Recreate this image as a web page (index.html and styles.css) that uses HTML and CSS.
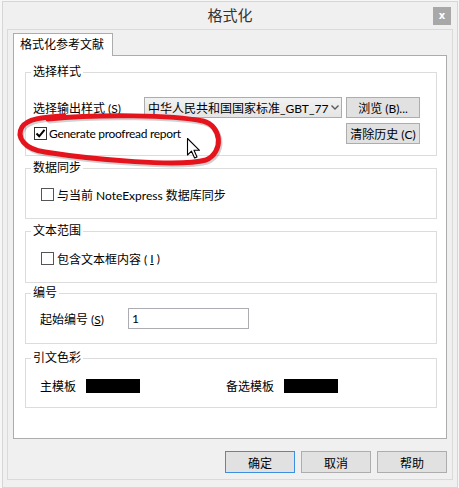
FILE: index.html
```html
<!DOCTYPE html>
<html>
  <head>
    <meta charset="utf-8">
    <title>格式化</title>
    <link rel="stylesheet" href="styles.css">
  </head>
  <body>
    <div class="window">
      <div class="titlebar">
        <div class="title">格式化</div>
        <div class="close">x</div>
      </div>
      <div class="client">
        <div class="tabs">
          <div class="tab">格式化参考文献</div>
        </div>
        <div class="page">

          <fieldset class="group g1">
            <legend>选择样式</legend>
            <div class="style-grid">
              <span>选择输出样式 (<u>S</u>)</span>
              <div class="select">
                <span class="select-text">中华人民共和国国家标准_GBT_77</span>
                <svg class="chev" width="8" height="5" viewBox="0 0 8 5"><polyline points="0.5,0.5 4,4 7.5,0.5" fill="none" stroke="#5a5a5a" stroke-width="1.4"/></svg>
              </div>
              <button class="btn">浏览 (B)...</button>
              <label class="check wide">
                <span class="box on"><svg width="11" height="11" viewBox="0 0 11 11"><polyline points="1.5,5.5 4.2,8.3 9.5,1.8" fill="none" stroke="#000" stroke-width="2"/></svg></span>
                <span class="latin">Generate proofread report</span>
              </label>
              <button class="btn">清除历史 (C)</button>
            </div>
          </fieldset>

          <fieldset class="group g2">
            <legend>数据同步</legend>
            <label class="check indent"><span class="box"></span>与当前 NoteExpress 数据库同步</label>
          </fieldset>

          <fieldset class="group g3">
            <legend>文本范围</legend>
            <label class="check indent"><span class="box"></span>包含文本框内容 (<u>I</u>)</label>
          </fieldset>

          <fieldset class="group g4">
            <legend>编号</legend>
            <div class="num-row">
              <span>起始编号 (<u>S</u>)</span>
              <input class="field" type="text" value="1">
            </div>
          </fieldset>

          <fieldset class="group g5">
            <legend>引文色彩</legend>
            <div class="color-row">
              <div class="swatch-item">主模板<span class="swatch"></span></div>
              <div class="swatch-item">备选模板<span class="swatch"></span></div>
            </div>
          </fieldset>

        </div>
        <div class="actions">
          <button class="btn default">确定</button>
          <button class="btn">取消</button>
          <button class="btn">帮助</button>
        </div>
      </div>
    </div>

    <!-- hand drawn highlight and mouse pointer over the dialog -->
    <svg class="annot" width="459" height="488" viewBox="0 0 459 488">
      <path d="M48 119 C100 114 172 115 203 121 C222 126 224 152 206 160 C180 167 95 160 45 152 C24 149 16 137 22 127 C27 119 42 117 64 116" fill="none" stroke="#000" stroke-opacity="0.18" stroke-width="5" stroke-linecap="round" transform="translate(1.5 2)"/>
      <path d="M48 119 C100 114 172 115 203 121 C222 126 224 152 206 160 C180 167 95 160 45 152 C24 149 16 137 22 127 C27 119 42 117 64 116" fill="none" stroke="#e5141c" stroke-width="5" stroke-linecap="round"/>
      <path d="M187.5 138.5 L187.5 155 L191.5 151.2 L194.6 158 L197 157 L194 150.3 L199.5 150.3 Z" fill="#fff" stroke="#000" stroke-width="1.1" stroke-linejoin="round"/>
    </svg>
  </body>
</html>
```

FILE: styles.css
```css
* {
  box-sizing: border-box;
}
body {
  margin: 0;
  padding: 1px 0 0 2px;
  width: 459px;
  height: 488px;
  overflow: hidden;
  background: #f6f6f6;
  font-family: Lato, "Noto Sans CJK SC", sans-serif;
  font-size: 12px;
  color: #000;
}
.window {
  width: 456px;
  height: 487px;
  border: 1px solid #d6d6d6;
  background: #f0f0f0;
  display: flex;
  flex-direction: column;
}
.titlebar {
  height: 27px;
  display: grid;
  grid-template-columns: 1fr auto 1fr;
  align-items: start;
}
.title {
  grid-column: 2;
  font-size: 15px;
  line-height: 26px;
  color: #333;
}
.close {
  grid-column: 3;
  justify-self: end;
  width: 18px;
  height: 18px;
  margin: 5px 6px 0 0;
  background: #a8a8a8;
  color: #fff;
  font: bold 10px/17px "DejaVu Sans", sans-serif;
  text-align: center;
}
.client {
  margin: 0 4px;
  height: 451px;
  border: 1px solid #dadada;
  padding: 3px 5px 0;
  display: flex;
  flex-direction: column;
}
.tabs {
  display: flex;
  height: 23px;
  margin-bottom: -1px;
  position: relative;
  z-index: 1;
}
.tab {
  width: 100px;
  height: 23px;
  border: 1px solid #acacac;
  border-bottom: none;
  background: #fff;
  padding-left: 6px;
  line-height: 21px;
}
.page {
  height: 384px;
  border: 1px solid #acacac;
  background: #fff;
  padding: 8px 9px 0 11px;
}

/* group boxes */
.group {
  margin: 0;
  min-width: 0;
  border: 1px solid #dcdcdc;
  padding: 0 9px 0 7px;
}
.group legend {
  padding: 0 2px;
  margin-left: -2px;
  line-height: 16px;
}
.g1 {
  padding-top: 17px;
  padding-bottom: 11px;
}
.g2 {
  margin-top: 4px;
  padding-top: 10px;
  padding-bottom: 16px;
}
.g3 {
  margin-top: 4px;
  padding-top: 11px;
  padding-bottom: 16px;
}
.g4 {
  margin-top: 2px;
  padding-top: 7px;
  padding-bottom: 14px;
}
.g5 {
  margin-top: 6px;
  padding-top: 11px;
  padding-bottom: 14px;
}

.style-grid {
  display: grid;
  grid-template-columns: 107px 198px 74px;
  grid-auto-rows: 21px;
  column-gap: 4px;
  row-gap: 5px;
  align-items: center;
}
.wide {
  grid-column: 1 / 3;
  margin-left: 1px;
}
.latin {
  letter-spacing: -0.3px;
}
.select {
  height: 21px;
  border: 1px solid #acacac;
  background: linear-gradient(#f2f2f2, #e5e5e5);
  display: flex;
  align-items: center;
  padding: 0 6px 0 3px;
  gap: 3px;
}
.select-text {
  flex: 1;
  white-space: nowrap;
}
.chev {
  flex: none;
}

.btn {
  font: inherit;
  color: #000;
  height: 21px;
  padding: 0;
  border: 1px solid #adadad;
  background: #e1e1e1;
}

.check {
  display: flex;
  align-items: center;
  gap: 2px;
  height: 16px;
}
.indent {
  margin-left: 8px;
  gap: 3px;
}
.box {
  width: 13px;
  height: 13px;
  border: 1px solid #555;
  background: #fff;
  display: inline-flex;
  align-items: center;
  justify-content: center;
}
.box.on {
  border-color: #333;
}

.num-row {
  display: grid;
  grid-template-columns: 88px 121px;
  align-items: center;
  margin-left: 7px;
}
.field {
  font: inherit;
  width: 121px;
  height: 21px;
  border: 1px solid #abadb3;
  padding: 0 0 0 3px;
}

.color-row {
  display: grid;
  grid-template-columns: 186px 1fr;
  margin-left: 7px;
  height: 16px;
  align-items: center;
}
.swatch-item {
  display: flex;
  align-items: center;
  gap: 10px;
}
.swatch {
  width: 54px;
  height: 14px;
  background: #000;
}

.actions {
  display: flex;
  justify-content: flex-end;
  gap: 6px;
  margin-top: 12px;
}
.actions .btn {
  width: 70px;
  height: 22px;
}
.btn.default {
  border-color: #3d8ee0;
}

.annot {
  position: absolute;
  left: 0;
  top: 0;
  pointer-events: none;
}
```
